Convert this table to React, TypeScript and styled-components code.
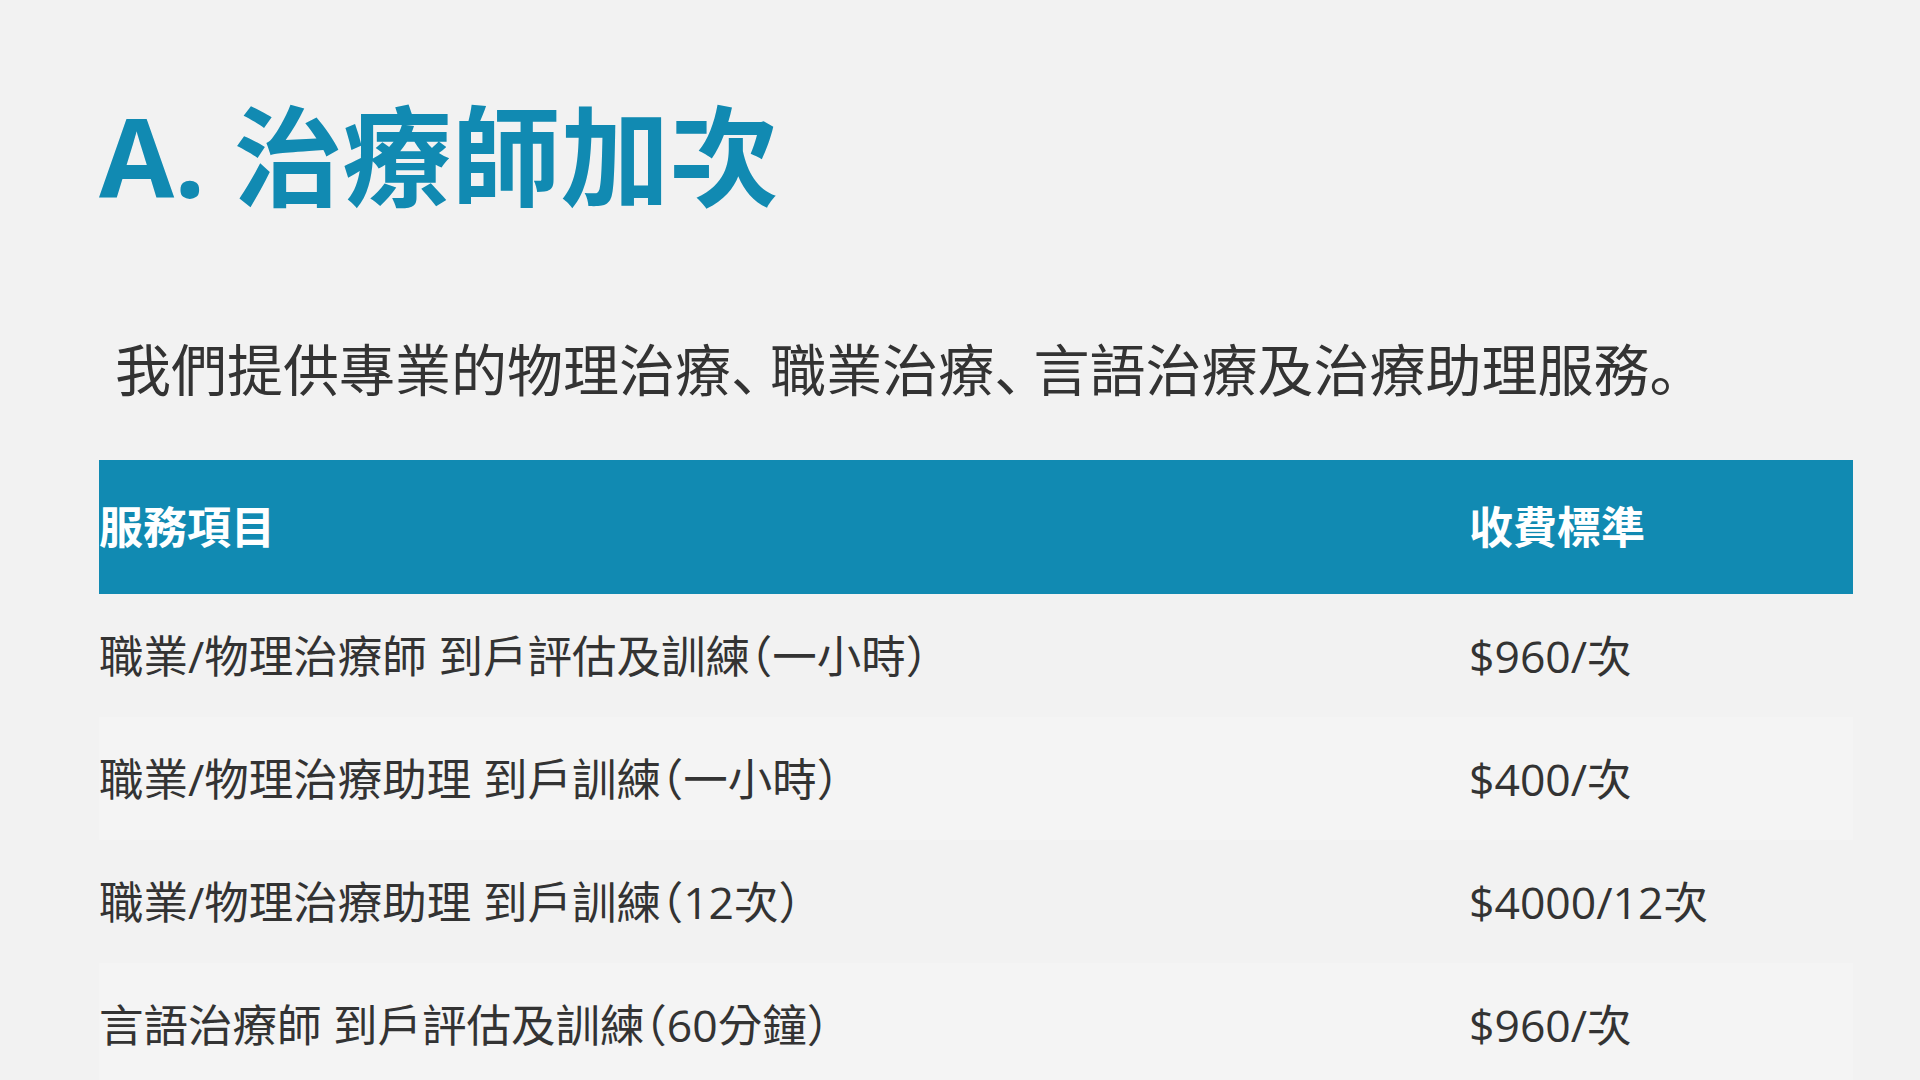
import React from "react";
import styled, { createGlobalStyle } from "styled-components";

const teal = "#118ab2";
const pageBg = "#f2f2f2";
const stripe = "#f4f4f4";
const ink = "#333333";

const GlobalStyle = createGlobalStyle`
  html, body {
    margin: 0;
    padding: 0;
    background: ${pageBg};
  }
  body {
    font-family: "Open Sans", "Noto Sans CJK TC", sans-serif;
    color: ${ink};
  }
`;

const Page = styled.main`
  width: 1754px;
  margin-left: 99px;
  padding-top: 90px;
  height: 1080px;
  box-sizing: border-box;
  overflow: hidden;
`;

const Title = styled.h1`
  margin: 0;
  font-family: "Open Sans", "Noto Sans CJK TC", sans-serif;
  font-weight: 700;
  font-size: 109px;
  line-height: 132px;
  color: ${teal};
`;

const Lead = styled.p`
  margin: 104px 0 0;
  padding-left: 16px;
  font-family: "Noto Sans CJK TC", sans-serif;
  font-size: 56px;
  line-height: 82px;
  color: ${ink};
  text-spacing-trim: space-all;
  white-space: nowrap;
`;

/* bottom-left placed 、 and 。 as in the reference; the comma is set tighter */
const Punct = styled.span<{ $tight?: boolean }>`
  font-family: "Noto Sans CJK JP", "Noto Sans CJK TC", sans-serif;
  letter-spacing: ${({ $tight }) => ($tight ? "-0.3em" : "0")};
`;

const Table = styled.div`
  margin-top: 52px;
  display: flex;
  flex-direction: column;
`;

const Row = styled.div<{ $head?: boolean; $alt?: boolean }>`
  display: grid;
  grid-template-columns: 1370px 1fr;
  align-items: center;
  height: ${({ $head }) => ($head ? 134 : 123)}px;
  background: ${({ $head, $alt }) => ($head ? teal : $alt ? stripe : pageBg)};
  color: ${({ $head }) => ($head ? "#ffffff" : ink)};
  font-weight: ${({ $head }) => ($head ? 700 : 400)};
  font-size: ${({ $head }) => ($head ? 44 : 44.5)}px;
  line-height: 60px;
  font-feature-settings: "halt";
  flex-shrink: 0;
`;

const Cell = styled.div`
  white-space: nowrap;
`;

const rows = [
  { item: "職業/物理治療師 到戶評估及訓練（一小時）", fee: "$960/次" },
  { item: "職業/物理治療助理 到戶訓練（一小時）", fee: "$400/次" },
  { item: "職業/物理治療助理 到戶訓練（12次）", fee: "$4000/12次" },
  { item: "言語治療師 到戶評估及訓練（60分鐘）", fee: "$960/次" },
];

export default function App() {
  return (
    <>
      <GlobalStyle />
      <Page>
        <Title>A. 治療師加次</Title>
        <Lead>
          {"我們提供專業的物理治療"}
          <Punct $tight>、</Punct>
          {"職業治療"}
          <Punct $tight>、</Punct>
          {"言語治療及治療助理服務"}
          <Punct>。</Punct>
        </Lead>
        <Table>
          <Row $head>
            <Cell>服務項目</Cell>
            <Cell>收費標準</Cell>
          </Row>
          {rows.map((r, i) => (
            <Row key={r.item} $alt={i % 2 === 1}>
              <Cell>{r.item}</Cell>
              <Cell>{r.fee}</Cell>
            </Row>
          ))}
        </Table>
      </Page>
    </>
  );
}
